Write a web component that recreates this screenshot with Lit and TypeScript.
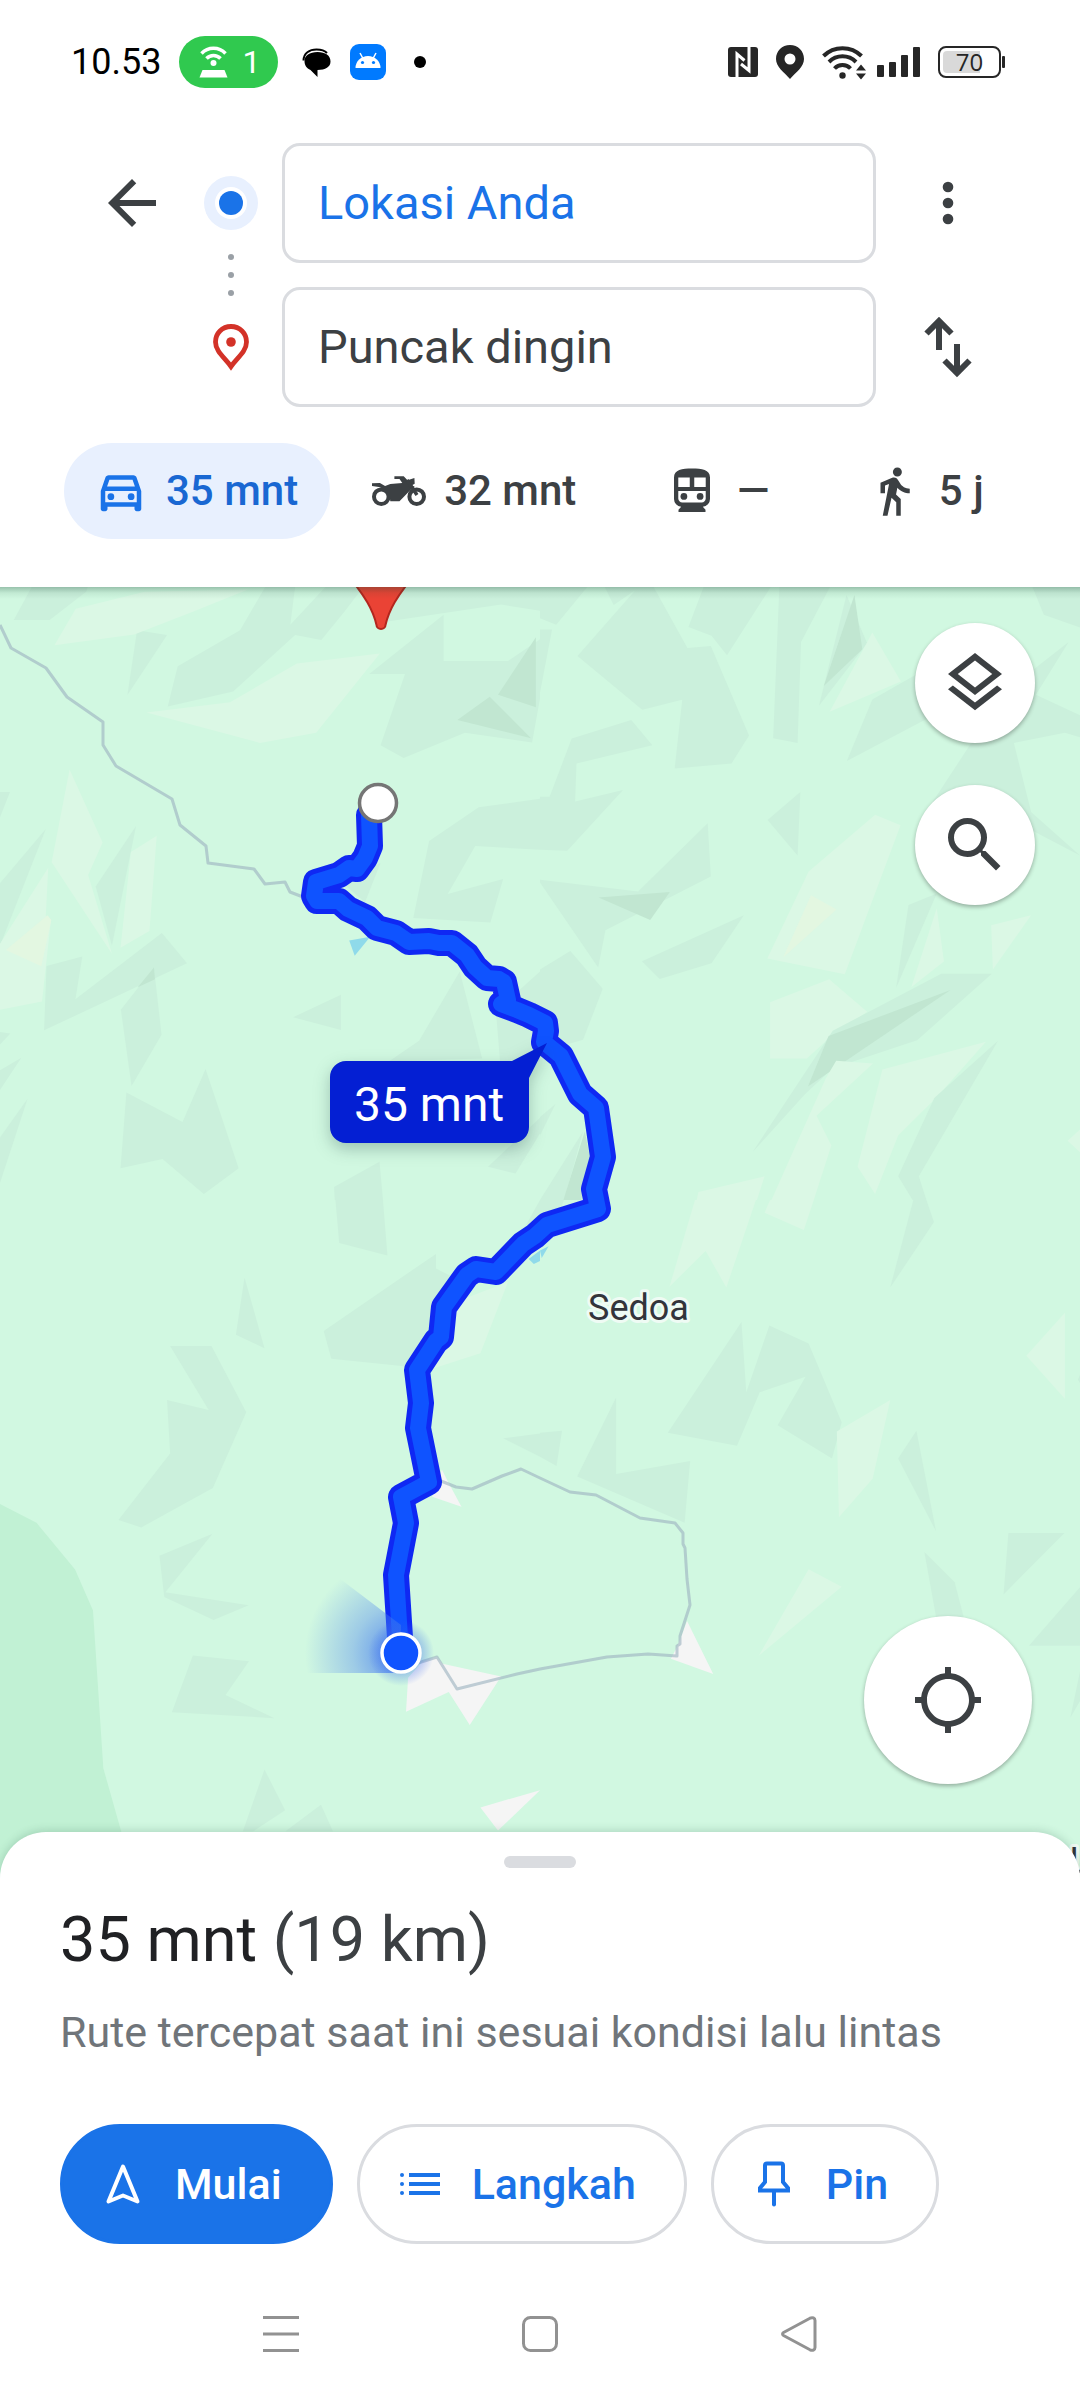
import { LitElement, html, css, svg } from "lit";
import { customElement, property } from "lit/decorators.js";
import { classMap } from "lit/directives/class-map.js";

type Shade = "dark" | "deep" | "light" | "cream" | "water" | "bare" | "forest";
type Patch = [Shade, string];
interface Tile {
  x: number;
  y: number;
  width: number;
  height: number;
  patches: Patch[];
}

/* Terrain relief, stored per tile in units of 1568 by 1568. */
const tiles: Tile[] = [
  {
    x: 0, y: 580, width: 540, height: 620,
    patches: [
      ["dark", "92,18 40,101 144,101 250,30 255,18"],
      ["dark", "398,127 485,139 370,291"],
      ["dark", "770,18 857,18 843,113 945,18 1055,18 1000,80 933,152 857,139 677,282 487,320 516,218 697,127"],
      ["dark", "1140,18 1568,18 1568,78 1455,62 1125,105"],
      ["dark", "1288,88 1288,205 1475,205 1568,150 1568,300 1545,411 1350,386 1172,450 1105,418 1176,238 1072,238"],
      ["deep", "1556,145 1446,290 1556,322"],
      ["deep", "1422,295 1542,400 1328,354"],
      ["dark", "1568,553 1390,575 1246,660 1200,855 1424,866 1461,756 1300,794 1380,673 1568,682"],
      ["dark", "0,536 29,536 0,600"],
      ["dark", "133,630 0,767 0,925"],
      ["dark", "395,622 278,775 325,925"],
      ["dark", "135,976 239,952 219,1060 470,893 543,969 128,1139"],
      ["dark", "447,980 469,1150 382,1280 351,1087"],
      ["deep", "447,980 450,1010 400,1030"],
      ["dark", "0,1143 30,1147 0,1175"],
      ["dark", "62,1208 0,1240 0,1290"],
      ["dark", "80,1312 0,1410 0,1525"],
      ["dark", "367,1296 530,1371 597,1237 693,1488 592,1553 472,1464 350,1488"],
      ["dark", "851,1106 990,1049 990,1138"],
      ["dark", "1105,715 1060,815 1000,770"],
      ["dark", "1335,990 1217,1165 1130,1217 1400,1210"],
      ["dark", "1568,990 1440,1090 1452,1217 1568,1217"],
      ["dark", "1568,1360 1417,1484 1497,1501 1568,1400"],
      ["dark", "1102,1471 1112,1568 972,1568 970,1535"],
      ["light", "220,73 420,30 720,24 560,80 390,138 158,165"],
      ["light", "862,211 1103,186 918,386 755,412 425,335 668,309"],
      ["light", "202,479 298,664 256,746 325,945 150,714"],
      ["light", "380,688 455,647 434,888 350,930"],
      ["light", "140,728 133,850 148,859 122,1066 0,1087 0,920"],
      ["cream", "138,848 149,860 120,977 17,936"],
      ["water", "1014,912 1075,902 1030,950"],
    ],
  },
  {
    x: 540, y: 580, width: 540, height: 620,
    patches: [
      ["dark", "0,18 137,18 47,113 0,97"],
      ["dark", "188,18 290,18 214,63"],
      ["dark", "285,18 330,18 428,172 496,167 607,393 556,464 391,477 413,303 297,328 109,192"],
      ["dark", "475,18 670,18 543,190 498,141 431,119"],
      ["dark", "695,18 842,18 758,157 748,412 677,400"],
      ["dark", "890,38 950,160 810,318"],
      ["deep", "913,38 936,175 824,268"],
      ["dark", "1430,18 1568,18 1568,120 1463,88"],
      ["dark", "1100,235 965,302 891,458 1180,325"],
      ["light", "965,133 1048,257 841,333"],
      ["dark", "1420,235 1535,157 1440,290 1568,342 1568,398 1524,386 1376,412 1426,587 1568,697 1400,620 1135,568 1250,415 1400,330"],
      ["dark", "0,548 28,548 92,401 265,354 326,418 106,464 102,560 241,531 79,685 0,682"],
      ["dark", "0,125 35,125 0,285"],
      ["dark", "487,615 496,750 190,886 169,980 0,765 0,758 285,788"],
      ["deep", "170,803 377,789 320,860"],
      ["dark", "592,848 498,969 348,1009 296,964"],
      ["dark", "88,938 182,1034 125,1163 85,1173 0,1160 0,985"],
      ["dark", "756,536 748,697 661,607"],
      ["light", "973,594 1047,620 885,997 660,957 780,737"],
      ["cream", "787,797 861,833 706,955"],
      ["light", "840,1010 950,1092 838,1160 775,1210 668,1210 668,1068"],
      ["dark", "1165,996 1312,996 1095,1164 850,1235 770,1300 617,1447 850,1140"],
      ["deep", "1192,1037 838,1153 778,1281"],
      ["light", "860,1216 967,1223 803,1355 846,1430 795,1568 672,1568 830,1260"],
      ["dark", "1152,793 1070,822 1034,1032"],
      ["light", "1152,830 1173,965 1078,1030"],
      ["light", "1310,873 1426,848 1315,985"],
      ["light", "1295,1168 1150,1310 1040,1405 973,1553 922,1484 994,1238"],
      ["dark", "1330,1165 1100,1508 1122,1568 1082,1568 1040,1508 1145,1310"],
      ["light", "1568,1390 1532,1418 1568,1447"],
      ["light", "460,1548 652,1508 630,1568 455,1568"],
      ["dark", "45,1325 0,1358 0,1405"],
      ["dark", "125,1395 0,1568 70,1568"],
      ["deep", "130,1395 145,1460 120,1568 68,1568"],
    ],
  },
  {
    x: 0, y: 1200, width: 540, height: 660,
    patches: [
      ["forest", "0,722 106,767 218,878 270,975 300,1350 353,1503 353,1568 0,1568"],
      ["dark", "974,0 1112,0 1125,132 985,102"],
      ["dark", "1266,128 1266,163 1320,185 1230,400 962,377 940,311"],
      ["light", "1475,195 1395,364 1260,400 1330,240"],
      ["dark", "710,184 768,352 685,320"],
      ["dark", "494,347 614,347 715,504 618,684 410,778 344,760 494,602 485,475 606,499"],
      ["dark", "617,793 463,845 477,943 620,998 722,963 480,932"],
      ["dark", "560,1082 723,1096 655,1176 797,1231 499,1217"],
      ["dark", "768,1353 828,1450 735,1500 705,1500"],
      ["dark", "932,1437 967,1500 828,1500"],
      ["dark", "1461,566 1568,555 1568,610"],
      ["dark", "1568,0 1520,70 1568,40"],
      ["water", "1535,140 1568,120 1568,145 1550,152"],
      ["bare", "1283,640 1300,668 1340,729 1255,705"],
      ["bare", "1185,1135 1225,1098 1268,1085 1285,1102 1455,1132 1364,1247 1303,1169 1179,1216"],
      ["bare", "1395,1443 1568,1402 1446,1498"],
    ],
  },
  {
    x: 540, y: 1200, width: 540, height: 660,
    patches: [
      ["dark", "0,0 70,0 60,20 0,30"],
      ["dark", "585,290 599,457 666,298 780,341 876,528 848,614 690,535 771,420 638,457 572,584 371,553"],
      ["light", "1017,475 966,662 868,754 862,550"],
      ["dark", "221,469 221,651 436,620 420,767 108,657"],
      ["dark", "0,553 64,548 48,632 0,610"],
      ["dark", "1093,548 1150,787 1040,614"],
      ["dark", "1084,0 1122,0 1144,52 1017,208"],
      ["light", "450,0 627,0 541,208 481,121 376,206"],
      ["light", "668,0 795,0 766,71 652,30"],
      ["light", "1524,268 1524,472 1412,370"],
      ["dark", "1568,415 1562,427 1568,435"],
      ["dark", "1360,791 1523,791 1346,937"],
      ["dark", "1116,836 1204,908 1230,990 1150,990"],
      ["light", "780,877 876,919 635,1083"],
      ["dark", "1568,920 1420,1059 1568,1059"],
      ["dark", "1568,1120 1540,1230 1568,1190"],
      ["water", "0,120 25,110 5,138"],
      ["bare", "427,1000 503,1126 380,1090 399,1060"],
    ],
  },
];

const roads = [
  "0,625 11,648 46,668 67,697 103,722 103,745 116,766 172,799 180,825 206,846 208,863 254,869 265,884 285,882 290,892 303,897",
  "441,1481 456,1487 472,1489 502,1476 521,1469 540,1478 570,1492 596,1495 640,1518 675,1523 683,1533 683,1544 685,1548 687,1579 690,1605 680,1636 680,1644 677,1646 677,1656 648,1654 607,1657 540,1669 517,1674 457,1689 437,1657 418,1663",
];

const route =
  "378,803 369,815 370,846 365,858 357,869 349,868 339,875 316,882 314,896 317,901 339,901 348,909 367,918 377,928 396,933 409,942 429,941 439,943 452,943 467,955 475,967 487,978 499,979 504,982 508,1000 501,1004 517,1010 529,1015 545,1023 546,1031 544,1042 561,1056 580,1094 596,1108 603,1157 594,1189 598,1209 547,1225 535,1236 523,1244 496,1272 476,1269 467,1275 444,1307 441,1337 436,1341 417,1370 421,1403 418,1428 429,1482 401,1497 406,1523 396,1575 401,1653";

const icon = {
  back: svg`<path d="M20 11H7.83l5.59-5.59L12 4l-8 8 8 8 1.41-1.41L7.83 13H20z"/>`,
  more: svg`<circle cx="12" cy="6" r="2"/><circle cx="12" cy="12" r="2"/><circle cx="12" cy="18" r="2"/>`,
  layers: svg`<path d="M11.99 18.54l-7.37-5.73L3 14.07l9 7 9-7-1.63-1.27zM12 16l7.36-5.73L21 9l-9-7-9 7 1.63 1.27zm0-11.47L17.74 9 12 13.47 6.26 9z"/>`,
  search: svg`<path d="M15.5 14h-.79l-.28-.27A6.47 6.47 0 0 0 16 9.5 6.5 6.5 0 1 0 9.5 16c1.61 0 3.09-.59 4.23-1.57l.27.28v.79l5 4.99L20.49 19zm-6 0C7.01 14 5 11.99 5 9.5S7.01 5 9.5 5 14 7.01 14 9.5 11.99 14 9.5 14z"/>`,
  locate: svg`<path d="M20.94 11A8.99 8.99 0 0 0 13 3.06V1h-2v2.06A8.99 8.99 0 0 0 3.06 11H1v2h2.06A8.99 8.99 0 0 0 11 20.94V23h2v-2.06A8.99 8.99 0 0 0 20.94 13H23v-2zM12 19c-3.87 0-7-3.13-7-7s3.13-7 7-7 7 3.13 7 7-3.13 7-7 7z"/>`,
  car: svg`<path d="M18.92 6.01C18.72 5.42 18.16 5 17.5 5h-11c-.66 0-1.21.42-1.42 1.01L3 12v8c0 .55.45 1 1 1h1c.55 0 1-.45 1-1v-1h12v1c0 .55.45 1 1 1h1c.55 0 1-.45 1-1v-8zM6.85 7h10.29l1.04 3H5.81zM19 17H5v-5h14z"/><circle cx="7.5" cy="14.5" r="1.5"/><circle cx="16.5" cy="14.5" r="1.5"/>`,
  train: svg`<path fill-rule="evenodd" d="M12 2C7.6 2 4 2.5 4 6v9.5A3.5 3.5 0 0 0 7.2 19L6 20.3v1h12v-1L16.8 19a3.5 3.5 0 0 0 3.2-3.5V6c0-3.5-3.6-4-8-4zM5.9 6H11v4.2H5.9zM13 6h5.1v4.2H13zM5.9 12H18.1v3.3c0 1-.8 1.8-1.8 1.8H7.7c-1 0-1.8-.8-1.8-1.8z"/><circle cx="8.4" cy="14.4" r="1.5"/><circle cx="15.6" cy="14.4" r="1.5"/>`,
  walk: svg`<path d="M13.5 5.5c1.1 0 2-.9 2-2s-.9-2-2-2-2 .9-2 2 .9 2 2 2zM9.8 8.9L7 23h2.1l1.8-8 2.1 2v6h2v-7.5l-2.1-2 .6-3C14.8 12 16.8 13 19 13v-2c-1.9 0-3.5-1-4.3-2.4l-1-1.6c-.4-.6-1-1-1.7-1-.3 0-.5.1-.8.1L6 8.3V13h2V9.6z"/>`,
  motorcycle: svg`<g transform="scale(.4444)"><circle cx="9.3" cy="32.7" r="7.3" fill="none" stroke="currentColor" stroke-width="4"/><circle cx="44.7" cy="32.7" r="7.3" fill="none" stroke="currentColor" stroke-width="4"/><path d="M22.4 12.3h9.3l3.8 4 6.9-2.3.3 5.7-2.7 1.6 3 1.7-3.4 2-3.1 3-9 9.3h-9.2l-.7-5.6-3.8-6L6.9 23 0 22v-2.7l7.9-.3 5.2 3 5.2-2 12-1-2.8-4h-5.1z"/><path d="M35 16l10 15" stroke="currentColor" stroke-width="3.5"/></g>`,
};

@customElement("status-bar")
class StatusBar extends LitElement {
  static styles = css`
    :host {
      display: flex;
      align-items: center;
      justify-content: space-between;
      height: 124px;
      padding: 0 75px 0 71px;
      color: #000;
      font-family: Roboto, "Liberation Sans", sans-serif;
    }
    svg { display: block; flex: none; }
    .left, .right, .signal { display: flex; align-items: center; }
    .left { gap: 18px; }
    .right { gap: 18px; color: #262626; }
    .signal { gap: 11px; }
    .time { font-size: 36px; line-height: 48px; }
    .hotspot {
      display: flex;
      align-items: center;
      gap: 14px;
      box-sizing: border-box;
      height: 52px;
      padding: 0 18px 0 20px;
      border-radius: 26px;
      background: #30c94f;
      color: #fff;
      font-size: 32px;
      line-height: 52px;
    }
    .battery {
      display: flex;
      align-items: center;
    }
    .cell {
      box-sizing: border-box;
      width: 63px;
      height: 32px;
      padding: 3px;
      border: 2px solid #262626;
      border-radius: 8px;
    }
    .level {
      width: 53px;
      height: 22px;
      border-radius: 4px;
      background: linear-gradient(90deg, #d9d9d9 70%, transparent 70%);
      font: 24px/22px "Open Sans", "Noto Sans", sans-serif;
      text-align: center;
    }
    .nub { width: 3px; height: 12px; margin-left: 1px; border-radius: 1px; background: #262626; }
  `;

  render() {
    return html`
      <div class="left">
        <span class="time">10.53</span>
        <span class="hotspot">
          <svg width="29" height="32" viewBox="0 0 29 32" fill="none" stroke="#fff" stroke-width="3.5">
            <path d="M2.500 7.500a16.500 16.500 0 0 1 24 0M7.500 12.500a9.500 9.500 0 0 1 14 0" />
            <circle cx="14.5" cy="17" r="3" fill="#fff" stroke="none" />
            <path d="M3.500 24h22l3 7.500h-28z" fill="#fff" stroke="none" />
          </svg>
          1
        </span>
        <svg width="36" height="36" viewBox="0 0 36 36">
          <path d="M7.500 16.500C7.500 9 13.500 5.500 20.500 5.500c4 0 8 .8 10.500 3.500" fill="none" stroke="#000" stroke-width="2" />
          <path d="M8.500 17c0-5.500 5-9 13-9s13 3.500 13 9.500c0 5.500-5 8.500-13 8.500v7L14.500 26c-4-1.500-6-5-6-9z" />
        </svg>
        <svg width="36" height="36" viewBox="0 0 36 36">
          <rect width="36" height="36" rx="9" fill="#007aff" />
          <path d="M5.500 24a12.500 12 0 0 1 25 0z" fill="#fff" />
          <path d="M10 9l3 5.500M26 9l-3 5.500" stroke="#fff" stroke-width="1.5" />
          <circle cx="12.5" cy="18.5" r="1.6" fill="#007aff" />
          <circle cx="23.5" cy="18.5" r="1.6" fill="#007aff" />
        </svg>
        <svg width="32" height="12" viewBox="0 0 32 12"><circle cx="16" cy="6" r="6" /></svg>
      </div>
      <div class="right">
        <svg width="30" height="30" viewBox="0 0 30 30">
          <rect width="30" height="30" rx="3" fill="#262626" />
          <path d="M9 31V7l7.500 6.500M21 -1v24.500L13 17" fill="none" stroke="#fff" stroke-width="3" />
        </svg>
        <svg width="28" height="34" viewBox="0 0 28 34" fill="#262626">
          <path fill-rule="evenodd" d="M14 0C6 0 0 6 0 14c0 8 8 13 14 20 6-7 14-12 14-20C28 6 22 0 14 0zm0 8.500a5.500 5.500 0 1 1 0 11 5.500 5.500 0 0 1 0-11z" />
        </svg>
        <div class="signal">
          <svg width="44" height="36" viewBox="0 0 44 36" fill="none" stroke="#262626" stroke-width="4">
            <path d="M1.500 12a27 27 0 0 1 38 0M7 18a19 19 0 0 1 27 0M12.500 24.500a11 11 0 0 1 16 0" />
            <circle cx="20.5" cy="31.5" r="3.2" fill="#262626" stroke="none" />
            <path d="M39 20.500l5 6H34zM39 35.500l5-6H34z" fill="#262626" stroke="none" />
          </svg>
          <svg width="43" height="30" viewBox="0 0 43 30" fill="#262626">
            <rect y="18" width="7" height="12" rx="1" /><rect x="12" y="15" width="7" height="15" rx="1" />
            <rect x="24" y="8" width="7" height="22" rx="1" /><rect x="36" width="7" height="30" rx="1" />
          </svg>
        </div>
        <div class="battery">
          <div class="cell"><div class="level">70</div></div>
          <div class="nub"></div>
        </div>
      </div>
    `;
  }
}

@customElement("mode-tab")
class ModeTab extends LitElement {
  @property() icon: keyof typeof icon = "car";
  @property() duration = "";
  @property() name = "";
  @property({ type: Boolean }) active = false;

  static styles = css`
    .tab {
      display: flex;
      align-items: center;
      justify-content: center;
      gap: 18px;
      min-width: 196px;
      height: 96px;
      padding: 0 32px 0 30px;
      border: 0;
      border-radius: 48px;
      background: transparent;
      color: #3c4043;
      font: 500 42px/48px Roboto, "Liberation Sans", sans-serif;
      white-space: nowrap;
    }
    .active { background: #e8f0fe; color: #1967d2; }
    .glyph { width: 54px; height: 54px; fill: currentColor; flex: none; }
    .active .glyph { fill: #1a73e8; }
  `;

  render() {
    return html`
      <button class=${classMap({ tab: true, active: this.active })} aria-label="${this.name} ${this.duration}" aria-pressed=${this.active}>
        <svg class="glyph" viewBox="0 0 24 24">${icon[this.icon]}</svg>
        <span>${this.duration}</span>
      </button>
    `;
  }
}

@customElement("route-header")
class RouteHeader extends LitElement {
  static styles = css`
    :host {
      display: block;
      padding: 19px 0 48px;
      font-family: Roboto, "Liberation Sans", sans-serif;
    }
    svg { display: block; }
    .search { display: flex; gap: 36px; padding: 0 96px; }
    .route { display: flex; gap: 24px; flex: 1; min-width: 0; }
    .markers { display: flex; flex-direction: column; gap: 24px; padding-top: 33px; }
    .fields, .actions { display: flex; flex-direction: column; gap: 24px; }
    .fields { flex: 1; min-width: 0; }
    .field {
      box-sizing: border-box;
      width: 100%;
      height: 120px;
      padding: 0 33px 2px;
      border: 3px solid #dadce0;
      border-radius: 18px;
      background: #fff;
      color: #3c4043;
      font: 47px/56px Roboto, "Liberation Sans", sans-serif;
      outline: none;
    }
    .origin { color: #1a73e8; }
    .action {
      display: flex;
      align-items: center;
      justify-content: center;
      width: 72px;
      height: 120px;
      padding: 0;
      border: 0;
      background: transparent;
      fill: #3c4043;
    }
    .modes { display: flex; gap: 12px; margin-top: 36px; padding: 0 48px 0 64px; }
  `;

  render() {
    return html`
      <div class="search">
        <button class="action" aria-label="Kembali">
          <svg width="72" height="72" viewBox="0 0 24 24">${icon.back}</svg>
        </button>
        <div class="route">
          <div class="markers">
            <svg width="54" height="54" viewBox="0 0 54 54">
              <circle cx="27" cy="27" r="27" fill="#e8f0fe" />
              <circle cx="27" cy="27" r="16" fill="#fff" />
              <circle cx="27" cy="27" r="12" fill="#1a73e8" />
            </svg>
            <svg width="54" height="42" viewBox="0 0 54 42" fill="#9aa0a6">
              <circle cx="27" cy="3" r="3" /><circle cx="27" cy="21" r="3" /><circle cx="27" cy="39" r="3" />
            </svg>
            <svg width="54" height="54" viewBox="0 0 54 54">
              <path d="M27 6.500c-8.800 0-15.500 6.700-15.500 15.500C11.500 31.500 21 38 27 46.500 33 38 42.500 31.500 42.500 22 42.500 13.200 35.800 6.500 27 6.500z" fill="none" stroke="#d33228" stroke-width="4.8" />
              <circle cx="27" cy="22" r="4.8" fill="#d33228" />
            </svg>
          </div>
          <div class="fields">
            <input class="field origin" type="text" aria-label="Titik awal" value="Lokasi Anda" />
            <input class="field" type="text" aria-label="Tujuan" value="Puncak dingin" />
          </div>
        </div>
        <div class="actions">
          <button class="action" aria-label="Opsi lainnya">
            <svg width="64" height="64" viewBox="0 0 24 24">${icon.more}</svg>
          </button>
          <button class="action" aria-label="Tukar titik awal dan tujuan">
            <svg width="72" height="72" viewBox="0 0 72 72">
              <path d="M27 39V10M14.500 22.500L27 10l12.500 12.500M45 33v29M32.500 49.500L45 62l12.500-12.500" fill="none" stroke="#3c4043" stroke-width="6" />
            </svg>
          </button>
        </div>
      </div>
      <nav class="modes" aria-label="Moda transportasi">
        <mode-tab icon="car" name="Mobil" duration="35 mnt" active></mode-tab>
        <mode-tab icon="motorcycle" name="Motor" duration="32 mnt"></mode-tab>
        <mode-tab icon="train" name="Transportasi umum" duration="—"></mode-tab>
        <mode-tab icon="walk" name="Jalan kaki" duration="5 j"></mode-tab>
      </nav>
    `;
  }
}

@customElement("route-map")
class RouteMap extends LitElement {
  static styles = css`
    :host {
      display: block;
      position: relative;
      flex: 1 0 640px;
      overflow: hidden;
      background: #d1f8e1;
    }
    .canvas { position: absolute; width: 100%; height: 100%; display: block; }
    .dark { fill: #cbf0dc; }
    .deep { fill: #c1e6d1; }
    .light { fill: #dbf8e5; }
    .cream { fill: #e3f7e1; }
    .water { fill: #8fdaea; }
    .bare { fill: #f5f5f5; }
    .forest { fill: #c1f1d4; }
    .road { fill: none; stroke: #9fb5c2; stroke-opacity: 0.65; stroke-width: 3; stroke-linejoin: round; }
    .casing, .line { fill: none; stroke-linejoin: round; }
    .casing { stroke: #0f28f3; stroke-width: 26; }
    .line { stroke: #0f53ff; stroke-width: 16; }
    .callout { fill: #041fd3; filter: drop-shadow(0 6px 8px rgb(0 40 40 / 0.25)); }
    .time, .place { font-family: Roboto, "Liberation Sans", sans-serif; }
    .time { font-size: 48px; fill: #fff; }
    .place {
      font-size: 36px;
      fill: #33343b;
      stroke: #effbf4;
      stroke-width: 6;
      stroke-linejoin: round;
      paint-order: stroke;
    }
    .edge {
      position: absolute;
      inset: 0 0 auto;
      height: 12px;
      background: linear-gradient(rgb(20 70 50 / 0.3), rgb(20 70 50 / 0.08) 50%, transparent);
    }
    .tools {
      position: absolute;
      top: 36px;
      right: 45px;
      display: flex;
      flex-direction: column;
      gap: 42px;
    }
    .fab {
      display: flex;
      align-items: center;
      justify-content: center;
      width: 120px;
      height: 120px;
      padding: 0;
      border: 0;
      border-radius: 50%;
      background: #fff;
      fill: #3c4043;
      box-shadow: 0 2px 4px rgb(0 0 0 / 0.3);
    }
    .locate { position: absolute; right: 48px; bottom: 96px; width: 168px; height: 168px; }
  `;

  render() {
    return html`
      <svg class="canvas" viewBox="0 587 1080 1293" preserveAspectRatio="xMidYMid slice" role="img" aria-label="Peta rute">
        <defs>
          <radialGradient id="beam" gradientUnits="userSpaceOnUse" cx="401" cy="1653" r="96">
            <stop offset="0.2" stop-color="#3f78ef" stop-opacity="0.65" />
            <stop offset="0.5" stop-color="#3f78ef" stop-opacity="0.35" />
            <stop offset="1" stop-color="#3f78ef" stop-opacity="0" />
          </radialGradient>
          <radialGradient id="glow">
            <stop offset="0.5" stop-color="#2a5cf0" stop-opacity="0.4" />
            <stop offset="1" stop-color="#2a5cf0" stop-opacity="0" />
          </radialGradient>
        </defs>
        ${tiles.map(
          (tile) => svg`
            <svg x=${tile.x} y=${tile.y} width=${tile.width} height=${tile.height} viewBox="0 0 1568 1568" preserveAspectRatio="none">
              ${tile.patches.map(([shade, points]) => svg`<polygon class=${shade} points=${points} />`)}
            </svg>
          `
        )}
        <polygon class="forest" points="0,1858 122,1858 130,1880 0,1880" />
        ${roads.map((points) => svg`<polyline class="road" points=${points} />`)}
        <path d="M345 572C366 597 373 610 376.500 625a4.500 4 0 0 0 9 0C389 610 396 597 417 572z" fill="#ea4335" stroke="#b3261e" stroke-width="2" />
        <polyline class="casing" points=${route} />
        <polyline class="line" points=${route} />
        <path d="M401 1673H300V1570L339 1578 401 1625z" fill="url(#beam)" />
        <circle cx="401" cy="1653" r="33" fill="url(#glow)" />
        <circle cx="401" cy="1653" r="19" fill="#0f53ff" stroke="#fff" stroke-width="3.5" />
        <circle cx="378" cy="803" r="18.5" fill="#fff" stroke="#757575" stroke-width="3.5" />
        <path class="callout" d="M346 1061H512L547 1043 529 1078V1127a16 16 0 0 1-16 16H346a16 16 0 0 1-16-16V1077a16 16 0 0 1 16-16z" />
        <text class="time" x="354" y="1121">35 mnt</text>
        <text class="place" x="588" y="1320">Sedoa</text>
        <text class="place" x="1070" y="1873">U</text>
      </svg>
      <div class="edge"></div>
      <div class="tools">
        <button class="fab" aria-label="Lapisan peta">
          <svg width="72" height="72" viewBox="0 0 24 24">${icon.layers}</svg>
        </button>
        <button class="fab" aria-label="Telusuri di sepanjang rute">
          <svg width="72" height="72" viewBox="0 0 24 24">${icon.search}</svg>
        </button>
      </div>
      <button class="fab locate" aria-label="Lokasi saya">
        <svg width="72" height="72" viewBox="0 0 24 24">${icon.locate}</svg>
      </button>
    `;
  }
}

@customElement("route-sheet")
class RouteSheet extends LitElement {
  static styles = css`
    :host {
      display: block;
      position: relative;
      margin-top: -48px;
      padding: 24px 60px;
      border-radius: 46px 46px 0 0;
      background: #fff;
      box-shadow: 0 -1px 10px rgb(20 70 50 / 0.2);
      font-family: Roboto, "Liberation Sans", sans-serif;
    }
    .handle { width: 72px; height: 12px; margin: 0 auto; border-radius: 6px; background: #dadce0; }
    .title { margin: 36px 0 0; color: #202124; font-size: 63px; font-weight: 400; line-height: 72px; }
    .distance { color: #3c4043; }
    .note { margin: 32px 0 0; color: #70757a; font-size: 43px; line-height: 48px; }
    .buttons { display: flex; flex-wrap: wrap; gap: 24px; margin-top: 68px; }
    .button {
      display: flex;
      align-items: center;
      gap: 28px;
      box-sizing: border-box;
      height: 120px;
      padding: 0 48px 0 36px;
      border: 3px solid #dadce0;
      border-radius: 60px;
      background: #fff;
      color: #1a73e8;
      font: 500 43px/48px Roboto, "Liberation Sans", sans-serif;
    }
    .primary { border-color: #1a73e8; background: #1a73e8; color: #fff; }
    .glyph { width: 48px; height: 48px; fill: none; stroke: currentColor; stroke-width: 4; }
  `;

  render() {
    return html`
      <div class="handle"></div>
      <h1 class="title">35 mnt <span class="distance">(19 km)</span></h1>
      <p class="note">Rute tercepat saat ini sesuai kondisi lalu lintas</p>
      <div class="buttons">
        <button class="button primary">
          <svg class="glyph" viewBox="0 0 48 48"><path stroke-linejoin="round" d="M24 6.500L38.500 41.500 24 35.500 9.500 41.500z" /></svg>
          Mulai
        </button>
        <button class="button">
          <svg class="glyph" viewBox="0 0 48 48">
            <path d="M13 15h31M13 24h31M13 33h31" />
            <path d="M6 15h.01M6 24h.01M6 33h.01" stroke-linecap="round" />
          </svg>
          Langkah
        </button>
        <button class="button">
          <svg class="glyph" viewBox="0 0 48 48">
            <path d="M17 3.500h14a2 2 0 0 1 2 2V22l5 6v2.500H10V28l5-6V5.500a2 2 0 0 1 2-2z" />
            <path d="M24 31v13.500" stroke-linecap="round" />
          </svg>
          Pin
        </button>
      </div>
    `;
  }
}

@customElement("system-nav")
class SystemNav extends LitElement {
  static styles = css`
    :host {
      display: grid;
      position: relative;
      grid-template-columns: repeat(3, 1fr);
      height: 132px;
      padding: 0 14%;
      background: #fff;
    }
    .key {
      display: flex;
      align-items: center;
      justify-content: center;
      padding: 0;
      border: 0;
      background: transparent;
    }
    .glyph { width: 36px; height: 36px; fill: none; stroke: #929292; stroke-width: 3; stroke-linejoin: round; }
  `;

  render() {
    return html`
      <button class="key" aria-label="Aplikasi terbaru">
        <svg class="glyph" viewBox="0 0 36 36"><path d="M0 1.500h36M0 18h36M0 34.500h36" /></svg>
      </button>
      <button class="key" aria-label="Layar utama">
        <svg class="glyph" viewBox="0 0 36 36"><rect x="1.5" y="1.5" width="33" height="33" rx="7" /></svg>
      </button>
      <button class="key" aria-label="Kembali">
        <svg class="glyph" viewBox="0 0 36 36">
          <path d="M2.500 16.500L29 2.200C31.500 1 34 2 34 4.500v27c0 2.500-2.500 3.500-5 2.300L2.500 19.500c-1.300-.8-1.300-2.200 0-3z" />
        </svg>
      </button>
    `;
  }
}

@customElement("app-root")
class AppRoot extends LitElement {
  static styles = css`
    :host {
      display: flex;
      flex-direction: column;
      min-height: 100vh;
      background: #fff;
    }
  `;

  render() {
    return html`
      <status-bar></status-bar>
      <route-header></route-header>
      <route-map></route-map>
      <route-sheet></route-sheet>
      <system-nav></system-nav>
    `;
  }
}
